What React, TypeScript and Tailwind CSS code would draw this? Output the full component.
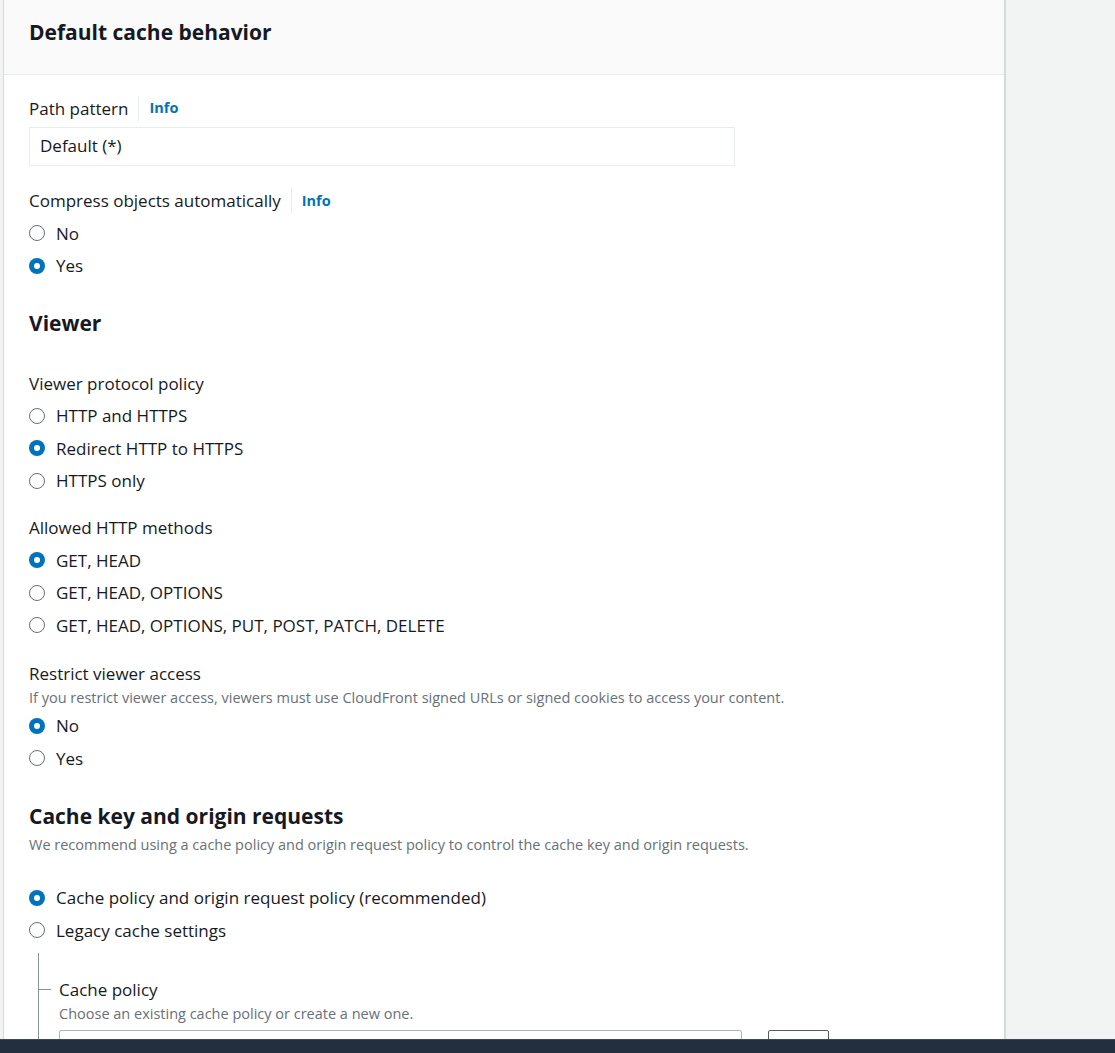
import React from "react"

const font = { fontFamily: '"Open Sans", "Liberation Sans", sans-serif' }

function Radio({ label, checked = false }: { label: string; checked?: boolean }) {
  return (
    <div className="flex h-[32.5px] items-center gap-[11px]">
      {checked ? (
        <span className="flex h-4 w-4 items-center justify-center rounded-full bg-[#0073bb]">
          <span className="h-[6px] w-[6px] rounded-full bg-white" />
        </span>
      ) : (
        <span className="h-4 w-4 rounded-full border-[1.5px] border-[#687078] bg-white" />
      )}
      <span className="text-[17px] text-[#16191f]">{label}</span>
    </div>
  )
}

function Label({ text, info = false }: { text: string; info?: boolean }) {
  return (
    <div className="flex h-[32.5px] items-center">
      <span className="text-[17px] text-[#16191f]">{text}</span>
      {info && (
        <span className="ml-[10px] flex h-[25px] items-center border-l border-[#eaeded] pl-[10px] text-[14.5px] font-bold text-[#0073bb]">
          Info
        </span>
      )}
    </div>
  )
}

export default function App() {
  return (
    <div className="flex h-[1053px] flex-col overflow-hidden bg-[#f2f3f3]" style={font}>
      <div className="flex min-h-0 flex-1">
        <div className="ml-[3px] w-[1003px] overflow-hidden border-l border-r-2 border-[#d5dbdb] bg-white">
          {/* Header */}
          <div className="h-[75px] border-b border-[#eaeded] bg-[#fafafa] pl-[25px] pt-[17px]">
            <h2 className="text-[21px] font-bold leading-[30px] text-[#16191f]">Default cache behavior</h2>
          </div>

          <div className="pl-[25px]">
            <div className="mt-[17px]">
              <Label text="Path pattern" info />
            </div>
            <div className="mt-[2px] flex h-[39px] w-[706px] items-center border border-[#eaeded] px-[10px] text-[17px] text-[#16191f]">
              Default (*)
            </div>

            <div className="mt-[19px]">
              <Label text="Compress objects automatically" info />
              <Radio label="No" />
              <Radio label="Yes" checked />
            </div>

            <h3 className="mt-[26px] flex h-[32px] items-center text-[21px] font-bold text-[#16191f]">Viewer</h3>

            <div className="mt-[27px]">
              <Label text="Viewer protocol policy" />
              <Radio label="HTTP and HTTPS" />
              <Radio label="Redirect HTTP to HTTPS" checked />
              <Radio label="HTTPS only" />
            </div>

            <div className="mt-[14.5px]">
              <Label text="Allowed HTTP methods" />
              <Radio label="GET, HEAD" checked />
              <Radio label="GET, HEAD, OPTIONS" />
              <Radio label="GET, HEAD, OPTIONS, PUT, POST, PATCH, DELETE" />
            </div>

            <div className="mt-[20px]">
              <div className="flex h-[24px] items-center text-[17px] text-[#16191f]">Restrict viewer access</div>
              <div className="flex h-[24px] items-center text-[14.5px] text-[#687078]">
                If you restrict viewer access, viewers must use CloudFront signed URLs or signed cookies to access your content.
              </div>
              <Radio label="No" checked />
              <Radio label="Yes" />
            </div>

            <h3 className="mt-[26px] flex h-[32px] items-center text-[21px] font-bold text-[#16191f]">
              Cache key and origin requests
            </h3>
            <div className="flex h-[24px] items-center text-[14.5px] text-[#687078]">
              We recommend using a cache policy and origin request policy to control the cache key and origin requests.
            </div>

            <div className="mt-[25px]">
              <Radio label="Cache policy and origin request policy (recommended)" checked />
              <Radio label="Legacy cache settings" />
            </div>

            {/* Nested cache policy */}
            <div className="ml-[9px] mt-[6px] border-l border-[#879596] pb-[40px] pl-[20px] pt-[25px]">
              <div className="-ml-[20px] flex h-[24px] items-center gap-[8px]">
                <span className="h-px w-[12px] bg-[#879596]" />
                <span className="text-[17px] text-[#16191f]">Cache policy</span>
              </div>
              <div className="flex h-[24px] items-center text-[14.5px] text-[#687078]">
                Choose an existing cache policy or create a new one.
              </div>
              <div className="mt-[4px] flex gap-[26px]">
                <div className="h-[34px] w-[683px] rounded-[2px] border border-[#aab7b8] bg-white" />
                <div className="h-[34px] w-[61px] rounded-[2px] border border-[#545b64] bg-white" />
              </div>
            </div>
          </div>
        </div>
      </div>
      <div className="h-[14px] border-t border-[#414750] bg-[#232f3e]" />
    </div>
  )
}
